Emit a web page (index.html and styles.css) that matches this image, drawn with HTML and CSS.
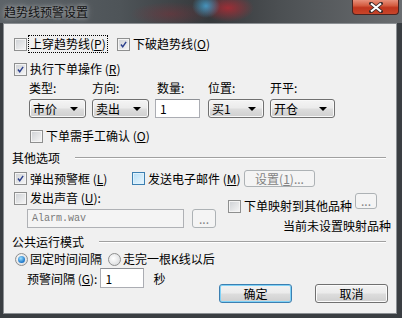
FILE: index.html
```html
<!DOCTYPE html>
<html lang="zh-CN">
<head>
    <meta charset="UTF-8">
    <title>趋势线预警设置</title>
    <link rel="stylesheet" href="styles.css">
</head>
<body>
    <div class="window">
        <div class="titlebar">
            <span class="title">趋势线预警设置</span>
            <span class="close">
                <svg width="14" height="11" viewBox="0 0 14 11"><path d="M2 1.5 L12 9.5 M12 1.5 L2 9.5" stroke="#3b2a2a" stroke-width="3.6" stroke-linecap="square"/><path d="M2 1.5 L12 9.5 M12 1.5 L2 9.5" stroke="#fff" stroke-width="2.2"/></svg>
            </span>
        </div>
        <div class="client">
            <div class="row r1">
                <span class="opt w103"><span class="cb"></span><span class="lbl focus">上穿趋势线(<u>P</u>)</span></span>
                <span class="opt"><span class="cb on"><svg viewBox="0 0 13 13"><path d="M3.5 6.5 L5.6 9.2 L9.6 3.4"/></svg></span><span class="lbl">下破趋势线(<u>O</u>)</span></span>
            </div>
            <div class="row r2">
                <span class="opt"><span class="cb on"><svg viewBox="0 0 13 13"><path d="M3.5 6.5 L5.6 9.2 L9.6 3.4"/></svg></span><span class="lbl">执行下单操作 (<u>R</u>)</span></span>
            </div>
            <div class="order">
                <span class="cap">类型:</span>
                <span class="cap">方向:</span>
                <span class="cap c3">数量:</span>
                <span class="cap">位置:</span>
                <span class="cap">开平:</span>
                <span class="select w57">市价<i class="arrow"></i></span>
                <span class="select w57">卖出<i class="arrow"></i></span>
                <span class="input w45">1</span>
                <span class="select w56">买1<i class="arrow"></i></span>
                <span class="select w65">开仓<i class="arrow"></i></span>
            </div>
            <div class="row r3">
                <span class="opt"><span class="cb"></span><span class="lbl">下单需手工确认 (<u>O</u>)</span></span>
            </div>
            <div class="group g1"><span>其他选项</span><span class="rule"></span></div>
            <div class="row r4">
                <span class="opt w118"><span class="cb on"><svg viewBox="0 0 13 13"><path d="M3.5 6.5 L5.6 9.2 L9.6 3.4"/></svg></span><span class="lbl">弹出预警框 (<u>L</u>)</span></span>
                <span class="opt w112"><span class="cb hot"></span><span class="lbl">发送电子邮件 (<u>M</u>)</span></span>
                <span class="btn off w71">设置(<u>1</u>)...</span>
            </div>
            <div class="sound">
                <div class="left">
                    <div class="row">
                        <span class="opt"><span class="cb"></span><span class="lbl">发出声音 (<u>U</u>):</span></span>
                    </div>
                    <div class="file">
                        <span class="input off w157">Alarm.wav</span>
                        <span class="btn off dots">...</span>
                    </div>
                </div>
                <div class="right">
                    <div class="map">
                        <span class="opt"><span class="cb"></span><span class="lbl">下单映射到其他品种</span></span>
                        <span class="btn off dots small">...</span>
                    </div>
                    <div class="note">当前未设置映射品种</div>
                </div>
            </div>
            <div class="group g2"><span>公共运行模式</span><span class="rule"></span></div>
            <div class="row r5">
                <span class="opt w93"><span class="radio on"></span><span class="lbl">固定时间间隔</span></span>
                <span class="opt"><span class="radio"></span><span class="lbl">走完一根K线以后</span></span>
            </div>
            <div class="bottom">
                <div class="interval">
                    <span>预警间隔 (<u>G</u>):</span>
                    <span class="input w44">1</span>
                    <span class="sec">秒</span>
                </div>
                <div class="actions">
                    <span class="btn def">确定</span>
                    <span class="btn">取消</span>
                </div>
            </div>
        </div>
    </div>
</body>
</html>
```

FILE: styles.css
```css
body {
    margin: 0;
    font-family: "Noto Sans CJK SC", "Liberation Sans", sans-serif;
    font-size: 12px;
    color: #000;
}
.window {
    width: 402px;
    height: 318px;
    display: flex;
    flex-direction: column;
    background: #3a3e42;
    overflow: hidden;
}
.titlebar {
    height: 23px;
    display: flex;
    align-items: flex-start;
    background:
        radial-gradient(ellipse 14px 12px at 206px 6px, rgba(70, 170, 220, 0.8), transparent),
        radial-gradient(ellipse 26px 14px at 228px 8px, rgba(190, 40, 50, 0.75), transparent),
        radial-gradient(ellipse 40px 12px at 170px 14px, rgba(150, 40, 50, 0.35), transparent),
        linear-gradient(to right, #5d6368 0%, #4e5458 30%, #35383b 52%, #4c5053 70%, #6a6d70 100%);
}
.title {
    margin: 4px 0 0 4px;
    line-height: 16px;
    color: #111;
    text-shadow: 0 0 4px rgba(255, 255, 255, 0.55), 0 0 8px rgba(255, 255, 255, 0.35);
}
.close {
    margin-left: auto;
    margin-right: 3px;
    width: 47px;
    height: 15px;
    box-sizing: border-box;
    border: 1px solid #4a2320;
    border-top: none;
    border-radius: 0 0 4px 4px;
    background: linear-gradient(#e7907b 0%, #d45c40 40%, #c0361e 55%, #c8452a 100%);
    display: flex;
    align-items: center;
    justify-content: center;
}
.close svg {
    display: block;
}
.client {
    flex: 1;
    margin: 0 5px 4px 3px;
    border: 1px solid #8b8f93;
    background: #f0f0f0;
    padding: 13px 0 0 8px;
}
.row {
    display: flex;
    align-items: center;
    height: 14px;
    line-height: 14px;
}
.opt {
    display: flex;
    align-items: center;
    white-space: nowrap;
}
.w93 { width: 93px; }
.w103 { width: 103px; }
.w112 { width: 112px; }
.w118 { width: 118px; }
.cb {
    width: 13px;
    height: 13px;
    box-sizing: border-box;
    border: 1px solid #8e8f8f;
    background: linear-gradient(135deg, #cdd0d4, #f7f7f7);
    box-shadow: inset 0 0 0 1px #f4f4f4;
    margin-right: 3px;
    flex: none;
}
.cb svg {
    display: block;
    width: 11px;
    height: 11px;
}
.cb svg path {
    fill: none;
    stroke: #2b3f8c;
    stroke-width: 1.7;
}
.cb.hot {
    border-color: #3c7fb1;
    background: linear-gradient(135deg, #b6def6, #eaf6fd);
    box-shadow: inset 0 0 0 1px #def2fd;
}
.radio {
    width: 13px;
    height: 13px;
    box-sizing: border-box;
    border: 1px solid #8e8f8f;
    border-radius: 50%;
    background: radial-gradient(circle at 40% 40%, #fff, #d2d4d6);
    margin-right: 2px;
    flex: none;
    display: flex;
    align-items: center;
    justify-content: center;
}
.radio.on::after {
    content: "";
    width: 7px;
    height: 7px;
    border-radius: 50%;
    background: radial-gradient(circle at 40% 35%, #9be0ff, #1a74c8 70%, #125ea8);
}
.focus {
    outline: 1px dotted #000;
    outline-offset: 1px;
}
.r1 {
    margin-left: 2px;
}
.r2 {
    margin: 11px 0 0 2px;
}
.order {
    display: grid;
    grid-template-columns: 63px 63px 53px 62px 65px;
    grid-template-rows: 14px 19px;
    row-gap: 4px;
    margin: 5px 0 0 17px;
    line-height: 14px;
}
.cap.c3 {
    margin-left: 2px;
}
.select {
    display: flex;
    align-items: center;
    box-sizing: border-box;
    height: 19px;
    padding-left: 3px;
    border: 1px solid #707070;
    border-radius: 3px;
    background: linear-gradient(#f4f4f4 0%, #ebebeb 48%, #dddddd 52%, #cfcfcf 100%);
    box-shadow: inset 0 0 0 1px #f8f8f8;
    position: relative;
}
.w56 { width: 56px; }
.w57 { width: 57px; }
.w65 { width: 65px; }
.arrow {
    margin-left: auto;
    margin-right: 7px;
    border-left: 4px solid transparent;
    border-right: 4px solid transparent;
    border-top: 4px solid #000;
}
.input {
    display: flex;
    align-items: center;
    box-sizing: border-box;
    height: 19px;
    padding-left: 4px;
    background: #fff;
    border: 1px solid #abadb3;
    border-top-color: #8d9095;
}
.w44 { width: 44px; height: 20px; }
.w45 { width: 45px; }
.w157 { width: 157px; }
.input.off {
    background: #f4f4f4;
    border-color: #afb1b5;
    color: #7a7a7a;
    font-family: "Liberation Mono", monospace;
    font-size: 10px;
}
.r3 {
    margin: 11px 0 0 18px;
}
.group {
    display: flex;
    align-items: center;
    height: 14px;
    line-height: 14px;
    margin-right: 10px;
}
.group .rule {
    flex: 1;
    margin-left: 15px;
    border-top: 1px solid #a0a0a0;
    border-bottom: 1px solid #fff;
}
.g1 {
    margin-top: 8px;
}
.r4 {
    height: 17px;
    margin: 5px 0 0 2px;
}
.btn {
    display: flex;
    align-items: center;
    justify-content: center;
    box-sizing: border-box;
    width: 73px;
    height: 19px;
    border: 1px solid #707070;
    border-radius: 3px;
    background: linear-gradient(#f2f2f2 0%, #ebebeb 48%, #dddddd 52%, #cfcfcf 100%);
    box-shadow: inset 0 0 0 1px #fbfbfb;
}
.btn.def {
    border-color: #3c7fb1;
    box-shadow: inset 0 0 0 1px #7fd2f7;
    background: linear-gradient(#eaf6fd 0%, #d9f0fc 48%, #bee6fd 52%, #a7d9f5 100%);
    background: linear-gradient(#f2f2f2 0%, #ebebeb 48%, #dddddd 52%, #cfcfcf 100%);
}
.btn.off {
    border-color: #adb2b5;
    background: #f4f4f4;
    box-shadow: none;
    color: #838383;
}
.w71 { width: 71px; height: 17px; }
.btn.dots {
    width: 24px;
    letter-spacing: 0;
}
.btn.small {
    width: 22px;
    height: 16px;
    align-self: flex-start;
    margin-left: 3px;
}
.sound {
    display: flex;
    margin-top: 4px;
}
.sound .left {
    width: 204px;
    margin-left: 2px;
}
.file {
    display: flex;
    gap: 8px;
    margin: 4px 0 0 13px;
}
.file .btn {
    height: 19px;
}
.sound .right {
    margin-left: 10px;
    margin-top: 2px;
}
.map {
    display: flex;
    align-items: flex-end;
    height: 20px;
    line-height: 14px;
}
.note {
    margin: 6px 0 0 55px;
    line-height: 14px;
}
.g2 {
    margin-top: 2px;
}
.r5 {
    margin: 3px 0 0 3px;
}
.bottom {
    display: flex;
    align-items: flex-start;
    margin: 2px 8px 0 15px;
}
.interval {
    display: flex;
    align-items: center;
    height: 20px;
}
.interval .input {
    margin-left: 3px;
}
.sec {
    margin-left: 9px;
}
.actions {
    display: flex;
    gap: 23px;
    margin: 16px 0 0 auto;
}
```
